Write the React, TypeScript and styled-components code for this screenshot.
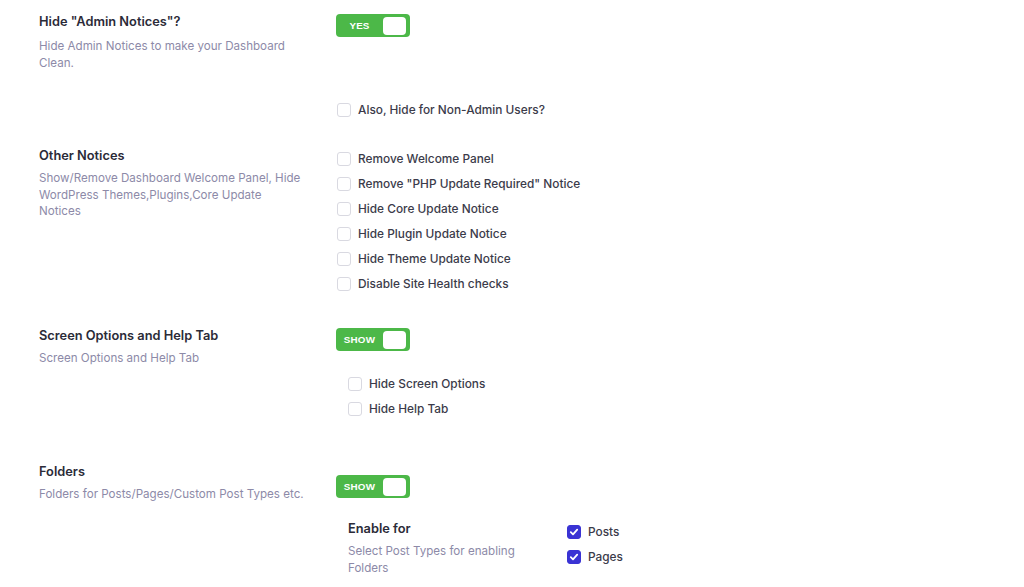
import React, { useState } from 'react'
import styled, { createGlobalStyle } from 'styled-components'

const TITLE = '#2b2b38'
const DESC = '#8d8aa8'
const LABEL = '#3b3b4a'
const GREEN = '#4cb848'
const BLUE = '#3a33d4'

const GlobalStyle = createGlobalStyle`
body{
    margin: 0;
    background: #ffffff;
    font-family: Inter, "Noto Sans", "Liberation Sans", sans-serif;
    -webkit-font-smoothing: antialiased;
}
`

const Page = styled.div`
padding: 14px 0 0 39px;
width: 1024px;
height: 587px;
box-sizing: border-box;
overflow: hidden;
`

const Section = styled.div<{ $gap: number }>`
display: grid;
grid-template-columns: 297px 1fr;
margin-bottom: ${p => p.$gap}px;
`

const Info = styled.div`
display: flex;
flex-direction: column;
`

const Title = styled.div<{ $top?: number }>`
margin-top: ${p => p.$top || 0}px;
font-size: 12.8px;
font-weight: 600;
line-height: 16px;
color: ${TITLE};
`

const Desc = styled.div<{ $width?: number; $top?: number }>`
margin-top: ${p => p.$top || 6}px;
font-size: 11.6px;
line-height: 16.5px;
color: ${DESC};
max-width: ${p => p.$width || 264}px;
`

const Controls = styled.div<{ $offset?: number }>`
display: flex;
flex-direction: column;
padding-top: ${p => p.$offset || 0}px;
`

const ToggleBox = styled.button`
width: 74px;
height: 23px;
border: none;
border-radius: 4px;
background: ${GREEN};
padding: 0 4px 0 0;
display: flex;
align-items: center;
cursor: pointer;
box-sizing: border-box;
span{
    flex: 1;
    text-align: center;
    color: white;
    font-family: inherit;
    font-size: 9.8px;
    font-weight: 700;
    letter-spacing: 0.2px;
}
div{
    width: 23px;
    height: 18px;
    border-radius: 4px;
    background: white;
}
`

const List = styled.div<{ $top: number; $indent?: number }>`
display: flex;
flex-direction: column;
margin-top: ${p => p.$top}px;
padding-left: ${p => p.$indent || 0}px;
`

const CheckRow = styled.label`
height: 25px;
display: flex;
align-items: center;
gap: 7px;
font-size: 11.85px;
font-weight: 500;
color: ${LABEL};
cursor: pointer;
input{
    display: none;
}
`

const Box = styled.span<{ $on: boolean }>`
width: 14px;
height: 14px;
margin-left: 1px;
border-radius: 3px;
box-sizing: border-box;
border: 1px solid ${p => p.$on ? BLUE : '#d9d9e1'};
background: ${p => p.$on ? BLUE : 'white'};
display: flex;
align-items: center;
justify-content: center;
flex-shrink: 0;
`

const SubGrid = styled.div`
display: grid;
grid-template-columns: 218px 1fr;
margin-top: 23px;
padding-left: 12px;
`

const Toggle = ({ on, label }: { on: string, label?: string }) => {
    const [state, setState] = useState(true)
    return (
        <ToggleBox onClick={() => setState(prev => !prev)}>
            <span>{state ? on : label || 'NO'}</span>
            <div></div>
        </ToggleBox>
    )
}

const Check = ({ label, checked = false }: { label: string, checked?: boolean }) => {
    const [on, setOn] = useState(checked)
    return (
        <CheckRow>
            <input type="checkbox" checked={on} onChange={() => setOn(prev => !prev)} />
            <Box $on={on}>
                {on ? <svg width="10" height="10" viewBox="0 0 10 10"><path d="M1.8 5.2 L4 7.3 L8.2 2.6" fill="none" stroke="white" strokeWidth="1.8" strokeLinecap="round" strokeLinejoin="round" /></svg> : null}
            </Box>
            {label}
        </CheckRow>
    )
}

const otherNotices = [
    'Remove Welcome Panel',
    'Remove "PHP Update Required" Notice',
    'Hide Core Update Notice',
    'Hide Plugin Update Notice',
    'Hide Theme Update Notice',
    'Disable Site Health checks'
]

export default function App() {
    return (
        <>
            <GlobalStyle />
            <Page>
                <Section $gap={24}>
                    <Info>
                        <Title>Hide "Admin Notices"?</Title>
                        <Desc $top={8}>Hide Admin Notices to make your Dashboard Clean.</Desc>
                    </Info>
                    <Controls>
                        <Toggle on="YES" />
                        <List $top={60}>
                            <Check label="Also, Hide for Non-Admin Users?" />
                        </List>
                    </Controls>
                </Section>

                <Section $gap={32}>
                    <Info>
                        <Title $top={2}>Other Notices</Title>
                        <Desc>Show/Remove Dashboard Welcome Panel, Hide WordPress Themes,Plugins,Core Update Notices</Desc>
                    </Info>
                    <Controls>
                        <List $top={0}>
                            {otherNotices.map(el => <Check key={el} label={el} />)}
                        </List>
                    </Controls>
                </Section>

                <Section $gap={43}>
                    <Info>
                        <Title>Screen Options and Help Tab</Title>
                        <Desc>Screen Options and Help Tab</Desc>
                    </Info>
                    <Controls>
                        <Toggle on="SHOW" />
                        <List $top={20} $indent={11}>
                            <Check label="Hide Screen Options" />
                            <Check label="Hide Help Tab" />
                        </List>
                    </Controls>
                </Section>

                <Section $gap={0}>
                    <Info>
                        <Title>Folders</Title>
                        <Desc $width={290}>Folders for Posts/Pages/Custom Post Types etc.</Desc>
                    </Info>
                    <Controls $offset={11}>
                        <Toggle on="SHOW" />
                        <SubGrid>
                            <Info>
                                <Title>Enable for</Title>
                                <Desc $width={170}>Select Post Types for enabling Folders</Desc>
                            </Info>
                            <List $top={-2}>
                                <Check label="Posts" checked />
                                <Check label="Pages" checked />
                            </List>
                        </SubGrid>
                    </Controls>
                </Section>
            </Page>
        </>
    )
}
